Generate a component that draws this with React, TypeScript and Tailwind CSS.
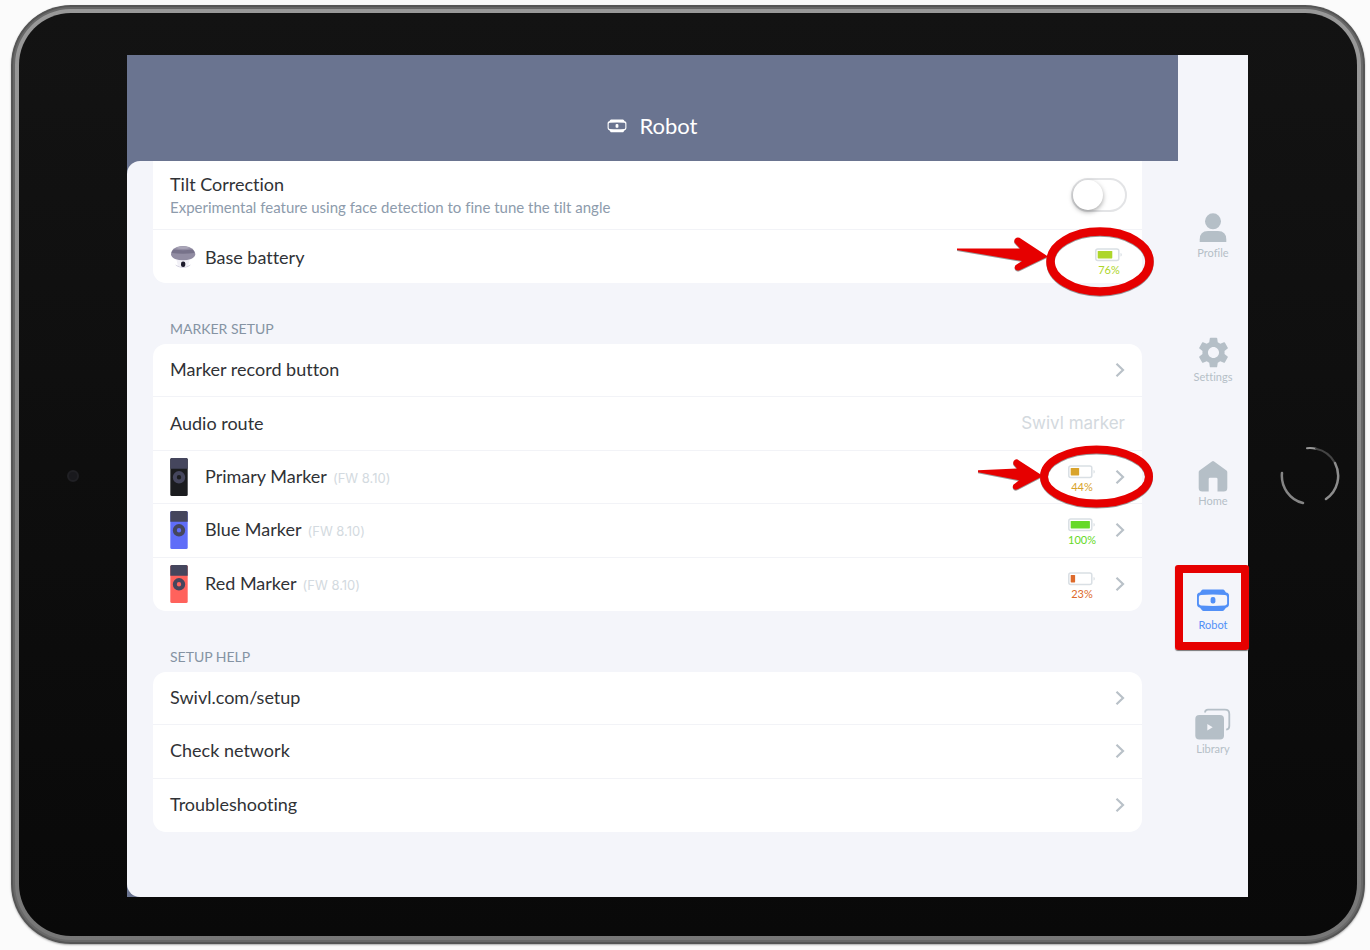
import type { ReactNode } from "react";
import { MdSettings } from "react-icons/md";

function RobotIcon({ className }: { className: string }) {
  return (
    <svg viewBox="0 0 34 23" className={className} fill="none" aria-hidden="true">
      <path
        d="M7 .6h20q1 0 1.600 .9L30 3.400q3 .3 3 3V15q0 3.200-3 3.700l-1.800 2.400q-.7 1-1.700 1H7.500q-1 0-1.700-1L4 18.700Q1 18.200 1 15V6.400q0-2.700 3-3L5.400 1.500Q6 .6 7 .6Z"
        fill="currentColor"
      />
      <path
        className="fill-[var(--hole)]"
        d="M5 5.900Q17 5 29 5.900q2.100 .2 2.100 2V14.300q0 2-2.100 2.300Q17 17.500 5 16.600 2.900 16.300 2.900 14.300V7.900q0-1.800 2.100-2Z"
      />
      <rect x="14.600" y="8" width="4.800" height="6.600" rx="2" fill="currentColor" />
    </svg>
  );
}

function ProfileIcon() {
  return (
    <svg viewBox="0 0 36 32" className="h-8 w-9" fill="currentColor" aria-hidden="true">
      <circle cx="18" cy="9.300" r="8" />
      <path d="M4.700 30V27.500Q4.700 19 13 19H23Q31.300 19 31.300 27.500V30Z" />
    </svg>
  );
}

function HomeIcon() {
  return (
    <svg viewBox="0 0 36 32" className="h-8 w-9" fill="currentColor" aria-hidden="true">
      <path d="M16.900 1.500q1.100-.8 2.200 0L31.500 10.600q.8.600.8 1.600V28q0 3.600-3.600 3.600H22.500V19q0-1.300-1.300-1.300H15q-1.300 0-1.300 1.300V31.600H7.300Q3.700 31.600 3.700 28V12.200q0-1 .8-1.600Z" />
    </svg>
  );
}

function LibraryIcon() {
  return (
    <svg viewBox="0 0 36 32" className="h-8 w-9" fill="none" aria-hidden="true">
      <path
        d="M10 4.500Q10.200 1.600 13 1.600H30Q34.300 1.600 34.300 5.900V18Q34.300 21.300 31.200 21.700"
        stroke="currentColor"
        strokeWidth="1.800"
      />
      <rect x="0.300" y="7" width="28.700" height="24.500" rx="4" fill="currentColor" />
      <path d="M12.300 16v6.600l5.400-3.300Z" fill="#f4f5fa" />
    </svg>
  );
}

function NavItem({ label, active, children }: { label: string; active?: boolean; children: ReactNode }) {
  return (
    <a
      href="#"
      aria-current={active ? "page" : undefined}
      className={`relative flex w-full flex-col items-center gap-[3px] ${active ? "text-[#5290f7]" : "text-[#b5bfc7]"}`}
    >
      <span className="flex h-8 items-center justify-center">{children}</span>
      <span className="text-[11px] leading-3">{label}</span>
      {active && (
        <span className="absolute -top-[19px] -right-px h-[85px] w-[74px] rounded-[3px] border-8 border-[#e60000] shadow-[0_1px_1px_#777]" />
      )}
    </a>
  );
}

function Battery({ level, color }: { level: number; color: string }) {
  return (
    <span className="flex w-7 flex-col items-center gap-[2px]" style={{ color }}>
      <svg viewBox="0 0 28 14" className="h-[14px] w-7" fill="none" aria-hidden="true">
        <rect x="0.800" y="0.900" width="23" height="11.500" rx="2" stroke="#d9dfe4" strokeWidth="1.500" />
        <path d="M25.500 5q1.300 .2 1.300 1.700T25.500 8.400Z" fill="#d9dfe4" />
        <rect x="2.700" y="3" width={0.192 * level} height="7.400" rx="0.600" fill="currentColor" />
      </svg>
      <span className="text-[11px] leading-3">{level}%</span>
    </span>
  );
}

function Chevron() {
  return (
    <svg viewBox="0 0 10 16" className="h-4 w-[10px]" fill="none" aria-hidden="true">
      <path d="M1.500 1.700 8 8 1.500 14.300" stroke="#b9c1c8" strokeWidth="2.200" />
    </svg>
  );
}

function MarkerIcon({ color }: { color: string }) {
  return (
    <svg viewBox="0 0 18 38" className="h-[38px] w-[18px]" aria-hidden="true">
      <rect x="0.300" width="17.400" height="38" rx="1.500" fill={color} />
      <path d="M.3 1.500Q.3 0 1.800 0H16.200Q17.700 0 17.700 1.500V10.700H.3Z" fill="#45465d" />
      <circle cx="9" cy="19.300" r="4.200" fill={color} stroke="#45465d" strokeWidth="4" />
    </svg>
  );
}

function BaseIcon() {
  return (
    <svg viewBox="0 0 26 24" className="h-6 w-[26px]" aria-hidden="true">
      <path d="M5 19.500Q13 24 21 19.500 18 22.800 13 22.800T5 19.500Z" fill="#c9c7d8" />
      <path d="M6 13H20L18 21Q13 23 8 21Z" fill="#f1f0f6" />
      <path d="M1 9Q1.500 4 7 2 13 0 19 2 24.500 4 25.300 9 25.500 12 21 14 13 16.500 5 14 .8 12 1 9Z" fill="#928da3" />
      <path d="M3.500 4.500Q13 6 22.500 4.500 25 6.500 24.500 8 13 9.500 1.500 8 1.500 6 3.500 4.500Z" fill="#77728a" />
      <path d="M5.500 3Q13-.5 20.500 3 13 5 5.500 3Z" fill="#aaa6b8" />
      <rect x="11" y="16.500" width="4.300" height="5.500" rx="2" fill="#1d1b2b" />
    </svg>
  );
}

const rowClass = "relative flex w-full items-center pr-[17px] pl-[17px] text-left";

function Row({ label, icon, note, value, battery, callout }: {
  label: string;
  icon?: ReactNode;
  note?: string;
  value?: string;
  battery?: ReactNode;
  callout?: ReactNode;
}) {
  return (
    <button type="button" className={rowClass}>
      {icon && <span className="flex w-[35px]">{icon}</span>}
      <span className="flex flex-1 items-baseline gap-[6px] pb-[2px]">
        <span>{label}</span>
        {note && <span className="font-['Inter',sans-serif] text-[13px] leading-5 text-[#d3dae0]">{note}</span>}
      </span>
      {value ? (
        <span className="pb-[2px] font-['Inter',sans-serif] text-[17px] text-[#d3d9de]">{value}</span>
      ) : (
        <span className="flex items-center gap-[19px]">
          {battery && <span className="pt-1">{battery}</span>}
          <Chevron />
        </span>
      )}
      {callout}
    </button>
  );
}

function LinkRow({ label }: { label: string }) {
  return (
    <a href="#" className={rowClass}>
      <span className="flex-1 pb-[2px]">{label}</span>
      <Chevron />
    </a>
  );
}

function SectionTitle({ children }: { children: ReactNode }) {
  return (
    <h2 className="flex h-[61px] items-end pb-[7px] pl-[17px] text-[14px] leading-4 text-[#8593a3]">{children}</h2>
  );
}

const cardClass = "grid divide-y divide-[#f2f3f7] bg-white";

export default function App() {
  return (
    <div className="flex min-h-screen bg-[#fbfbfb] pt-[5px] pr-[5px] pb-[6px] pl-[11px] font-['Lato',sans-serif] text-[18px] leading-6 text-[#303236] [font-variant-ligatures:none]">
      <div className="flex flex-1 rounded-[60px] bg-[#777] bg-linear-to-b from-[#999] via-[#888] to-[#777] p-2 shadow-[inset_0_0_0_2px_#555,inset_0_0_0_4px_#686868,0_1px_2px_#aaa]">
        <div className="flex flex-1 rounded-[52px] bg-linear-to-b from-[#131313] to-[#090909] pt-[42px] pb-[39px]">
          <div className="flex w-[108px] shrink-0 items-center justify-center">
            <span className="size-3 rounded-full border-2 border-[#202024] bg-[#19191d]" />
          </div>

          <div className="flex min-w-0 flex-1 bg-[#6a7490]">
            <main className="flex min-w-0 flex-1 flex-col">
              <header className="flex h-[106px] items-end justify-center gap-3 pb-[21px] text-white [--hole:#6a7490]">
                <span className="flex h-7 items-center">
                  <RobotIcon className="h-[14px] w-5" />
                </span>
                <h1 className="text-[22px] leading-7">Robot</h1>
              </header>

              <div className="flex-1 rounded-l-[13px] bg-[#f4f5fa] pr-9 pb-[60px] pl-[26px]">
                <section className={`${cardClass} rounded-b-[13px]`}>
                  <div className="flex h-[69px] items-center pr-[15px] pl-[17px]">
                    <label htmlFor="tilt" className="flex flex-1 flex-col gap-px pb-[2px]">
                      <span>Tilt Correction</span>
                      <span className="text-[15px] leading-5 text-[#8d9bac]">
                        Experimental feature using face detection to fine tune the tilt angle
                      </span>
                    </label>
                    <input
                      id="tilt"
                      type="checkbox"
                      role="switch"
                      className="h-[34px] w-14 appearance-none rounded-full border-2 border-[#e3e4e6] bg-white before:block before:size-[30px] before:rounded-full before:bg-white before:shadow-[0_2px_5px_rgba(0,0,0,0.35)] checked:before:translate-x-[22px]"
                    />
                  </div>
                  <div className="relative flex h-[53px] items-center pr-[19px] pl-[17px]">
                    <span className="flex w-[35px]">
                      <BaseIcon />
                    </span>
                    <span className="flex-1">Base battery</span>
                    <span className="pt-[10px]">
                      <Battery level={76} color="#aed62b" />
                    </span>
                    <svg
                      viewBox="0 0 200 72"
                      className="pointer-events-none absolute -top-[5px] -right-3 h-[72px] w-[200px] drop-shadow-[0_1px_0_rgba(0,0,0,0.4)]"
                      aria-hidden="true"
                    >
                      <ellipse cx="146" cy="36.500" rx="49.500" ry="30" fill="none" stroke="#e60000" strokeWidth="8.500" />
                      <path
                        d="M3 23.500 66 23.500 60.500 17.500Q59.500 14 62.500 12.700 65 12 67 13.800L94 31.500 66 45Q62 46.500 60.800 43.500 60 40.500 63 39.200L68 36 3 25Z"
                        fill="#e60000"
                      />
                    </svg>
                  </div>
                </section>

                <SectionTitle>MARKER SETUP</SectionTitle>
                <section className={`${cardClass} min-h-[267px] auto-rows-fr rounded-[13px]`}>
                  <Row label="Marker record button" />
                  <Row label="Audio route" value="Swivl marker" />
                  <Row
                    label="Primary Marker"
                    note="(FW 8.10)"
                    icon={<MarkerIcon color="#1b1c1f" />}
                    battery={<Battery level={44} color="#d9a32b" />}
                    callout={
                      <svg
                        viewBox="0 0 180 66"
                        className="pointer-events-none absolute -top-[7px] -right-3 h-[66px] w-[180px] drop-shadow-[0_1px_0_rgba(0,0,0,0.4)]"
                        aria-hidden="true"
                      >
                        <ellipse cx="122.500" cy="32.500" rx="52.500" ry="27" fill="none" stroke="#e60000" strokeWidth="8" />
                        <path
                          d="M4 26.300 43 24.500 39.500 20.500Q38.500 17 41 15.700 43 14.700 45 16.500L69 32 44 45Q40.500 46.700 39 44 38 41 41 39.500L45 36.300 4 28.300Z"
                          fill="#e60000"
                        />
                      </svg>
                    }
                  />
                  <Row
                    label="Blue Marker"
                    note="(FW 8.10)"
                    icon={<MarkerIcon color="#5f6df8" />}
                    battery={<Battery level={100} color="#66d926" />}
                  />
                  <Row
                    label="Red Marker"
                    note="(FW 8.10)"
                    icon={<MarkerIcon color="#ff625c" />}
                    battery={<Battery level={23} color="#dd6a2b" />}
                  />
                </section>

                <SectionTitle>SETUP HELP</SectionTitle>
                <section className={`${cardClass} min-h-[160px] auto-rows-fr rounded-[13px]`}>
                  <LinkRow label="Swivl.com/setup" />
                  <LinkRow label="Check network" />
                  <LinkRow label="Troubleshooting" />
                </section>
              </div>
            </main>

            <nav className="flex w-[70px] shrink-0 flex-col items-center gap-[77px] bg-[#f4f5fa] pt-[157px] [--hole:#f4f5fa]">
              <NavItem label="Profile">
                <ProfileIcon />
              </NavItem>
              <NavItem label="Settings">
                <MdSettings className="size-[37px] shrink-0" />
              </NavItem>
              <NavItem label="Home">
                <HomeIcon />
              </NavItem>
              <NavItem label="Robot" active>
                <RobotIcon className="h-[23px] w-[34px]" />
              </NavItem>
              <NavItem label="Library">
                <LibraryIcon />
              </NavItem>
            </nav>
          </div>

          <div className="flex w-[109px] shrink-0 items-center justify-center pl-[14px]">
            <button type="button" aria-label="Home button" className="rounded-full">
              <svg viewBox="0 0 60 60" className="size-[60px]" fill="none" strokeLinecap="round" aria-hidden="true">
                <path d="M27 2.200A28 28 0 0 1 36 2.700" stroke="#999" strokeWidth="2" />
                <path d="M36 2.700A28 28 0 0 1 55 17" stroke="#444" strokeWidth="2" />
                <path d="M55 17A28 28 0 0 1 46 53" stroke="#8d8d8d" strokeWidth="2.500" />
                <path d="M23 57A28 28 0 0 1 2 27" stroke="#858585" strokeWidth="2.500" />
              </svg>
            </button>
          </div>
        </div>
      </div>
    </div>
  );
}
